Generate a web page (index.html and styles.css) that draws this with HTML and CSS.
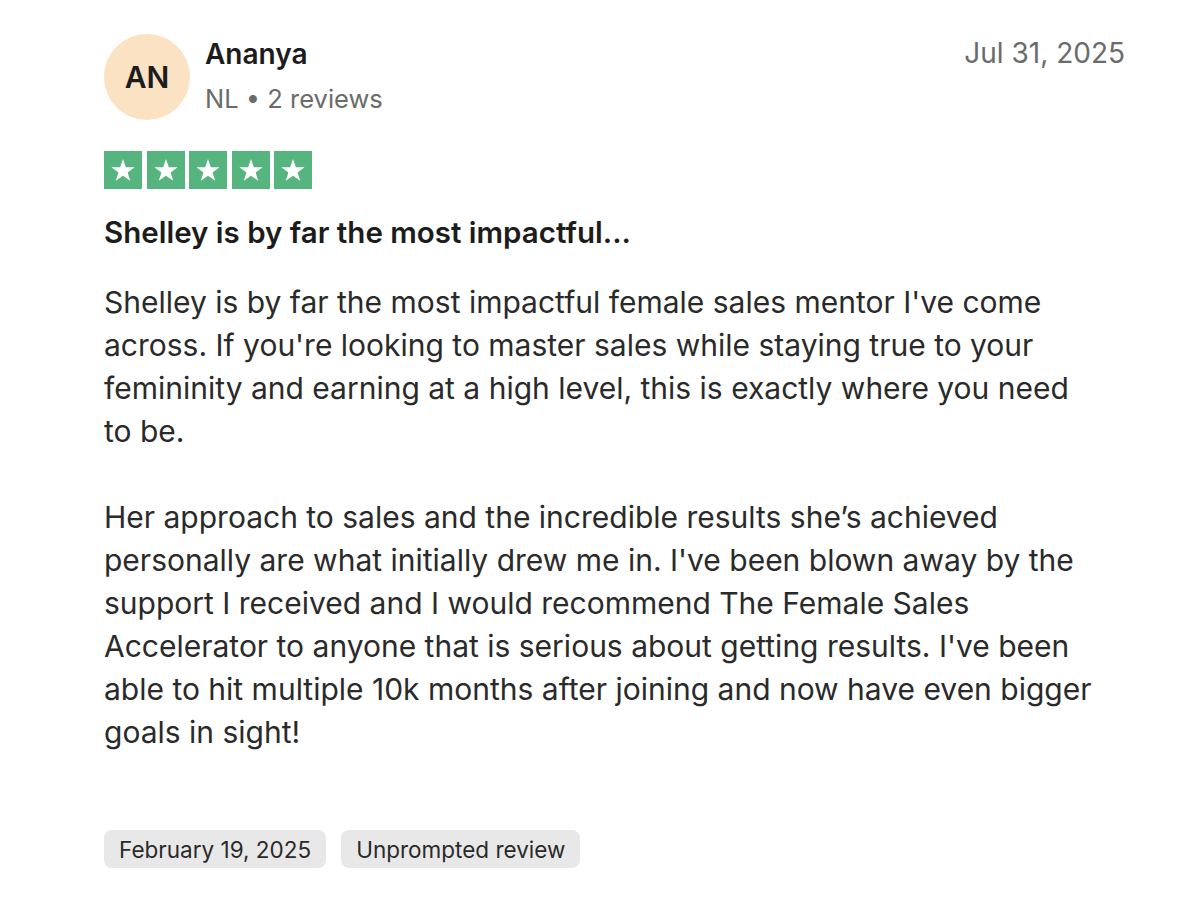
FILE: index.html
```html
<!DOCTYPE html>
<html lang="en">
<head>
<meta charset="utf-8">
<title>Review</title>
<link rel="stylesheet" href="styles.css">
</head>
<body>
<article class="review">
  <header class="review-header">
    <div class="consumer">
      <div class="avatar">AN</div>
      <div class="consumer-info">
        <div class="name">Ananya</div>
        <div class="meta">NL • 2 reviews</div>
      </div>
    </div>
    <time class="date">Jul 31, 2025</time>
  </header>
  <div class="stars" aria-label="Rated 5 out of 5">
    <span class="star"><svg viewBox="0 0 24 24"><path d="M12 3.2l2.3 6.6h7l-5.65 4.1 2.15 6.7L12 16.5l-5.8 4.1 2.15-6.7L2.7 9.8h7z"/></svg></span>
    <span class="star"><svg viewBox="0 0 24 24"><path d="M12 3.2l2.3 6.6h7l-5.65 4.1 2.15 6.7L12 16.5l-5.8 4.1 2.15-6.7L2.7 9.8h7z"/></svg></span>
    <span class="star"><svg viewBox="0 0 24 24"><path d="M12 3.2l2.3 6.6h7l-5.65 4.1 2.15 6.7L12 16.5l-5.8 4.1 2.15-6.7L2.7 9.8h7z"/></svg></span>
    <span class="star"><svg viewBox="0 0 24 24"><path d="M12 3.2l2.3 6.6h7l-5.65 4.1 2.15 6.7L12 16.5l-5.8 4.1 2.15-6.7L2.7 9.8h7z"/></svg></span>
    <span class="star"><svg viewBox="0 0 24 24"><path d="M12 3.2l2.3 6.6h7l-5.65 4.1 2.15 6.7L12 16.5l-5.8 4.1 2.15-6.7L2.7 9.8h7z"/></svg></span>
  </div>
  <h2 class="title">Shelley is by far the most impactful...</h2>
  <p class="text">Shelley is by far the most impactful female sales mentor I've come across. If you're looking to master sales while staying true to your femininity and earning at a high level, this is exactly where you need to be.</p>
  <p class="text">Her approach to sales and the incredible results she’s achieved personally are what initially drew me in. I've been blown away by the support I received and I would recommend The Female Sales Accelerator to anyone that is serious about getting results. I've been able to hit multiple 10k months after joining and now have even bigger goals in sight!</p>
  <div class="tags">
    <span class="tag">February 19, 2025</span>
    <span class="tag">Unprompted review</span>
  </div>
</article>
</body>
</html>
```

FILE: styles.css
```css
* { box-sizing: border-box; }
html, body {
  margin: 0;
  background: #ffffff;
}
body {
  font-family: Inter, "Liberation Sans", Arial, sans-serif;
  color: #2a2a2a;
}
.review {
  padding: 34px 75px 0 104px;
}
.review-header {
  display: flex;
  justify-content: space-between;
  align-items: flex-start;
}
.consumer {
  display: flex;
  align-items: center;
  gap: 15px;
}
.avatar {
  width: 86px;
  height: 86px;
  border-radius: 50%;
  background: #fbe2c3;
  color: #1c1c1c;
  display: flex;
  align-items: center;
  justify-content: center;
  font-size: 30px;
  font-weight: 600;
}
.consumer-info {
  display: flex;
  flex-direction: column;
  gap: 12px;
  margin-top: -4px;
}
.name {
  font-size: 28px;
  font-weight: 600;
  color: #1c1c1c;
}
.meta {
  font-size: 25.5px;
  color: #6b6b6b;
}
.date {
  font-size: 28px;
  color: #6b6b6b;
  margin-top: 2px;
}
.stars {
  display: flex;
  gap: 4.5px;
  margin-top: 31px;
}
.star {
  width: 38px;
  height: 38px;
  background: #56b47f;
  display: flex;
  align-items: center;
  justify-content: center;
}
.star svg {
  width: 30px;
  height: 30px;
  fill: #ffffff;
}
.title {
  font-size: 29.5px;
  font-weight: 600;
  line-height: 36px;
  margin: 25px 0 0;
  color: #1c1c1c;
}
.text {
  font-size: 30px;
  line-height: 43px;
  margin: 31px 0 0;
  max-width: 1000px;
}
.text + .text {
  margin-top: 43px;
}
.tags {
  display: flex;
  gap: 15px;
  margin-top: 76px;
}
.tag {
  background: #e8e8e8;
  border-radius: 8px;
  height: 38px;
  padding: 0 15px;
  display: flex;
  align-items: center;
  font-size: 22.5px;
  color: #2a2a2a;
}
```
